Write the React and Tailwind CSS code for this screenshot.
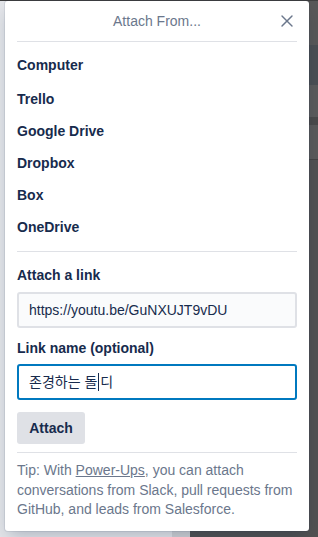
import { X } from "lucide-react";

const sources = ["Computer", "Trello", "Google Drive", "Dropbox", "Box", "OneDrive"];

function Backdrop() {
  return (
    <div className="absolute inset-0 flex flex-col">
      <div className="h-px bg-[#3f3f3f]" />
      <div className="flex flex-1">
        <div className="w-[172px] bg-[#e3e5e9]" />
        <div className="w-[18px] bg-[#cfd1d4]" />
        <div className="flex flex-1 flex-col bg-[#4f4f4f]">
          <div className="h-[44px] bg-[#585858]" />
          <div className="h-[40px] bg-[#4b4f53]" />
          <div className="h-[32px] bg-[#5b5b5b]" />
          <div className="h-[8px] bg-[#4a4a4a]" />
          <div className="h-[34px] bg-[#5a5a5a]" />
          <div className="h-[1px] bg-[#444]" />
          <div className="flex-1 bg-[#525252]" />
        </div>
      </div>
    </div>
  );
}

export default function App() {
  return (
    <div
      className="relative h-[537px] w-[318px] overflow-hidden"
      style={{ fontFamily: '"Liberation Sans", Arial, "Noto Sans CJK KR", sans-serif' }}
    >
      <Backdrop />

      {/* Popover */}
      <div className="absolute left-[5px] top-px w-[304px] rounded-[3px] bg-white shadow-[0_8px_16px_-4px_rgba(9,30,66,0.25),0_0_0_1px_rgba(9,30,66,0.08)]">
        <div className="relative mx-3 flex h-[41px] items-center justify-center border-b border-[#dfe1e6]">
          <span className="text-sm text-[#6b778c]">Attach From...</span>
          <button type="button" className="absolute right-0 top-[10px] text-[#6b778c]" aria-label="Close">
            <X size={20} strokeWidth={1.7} />
          </button>
        </div>

        <div className="px-3 pb-[11px]">
          <ul className="pt-[7px]">
            {sources.map((s, i) => (
              <li
                key={s}
                className={`flex h-8 items-center text-sm font-bold text-[#172b4d] ${i === 0 ? "mb-[2px]" : ""}`}
              >
                {s}
              </li>
            ))}
          </ul>

          <div className="mt-2 border-t border-[#dfe1e6]" />

          <div className="mt-[13px] flex h-5 items-center text-sm font-bold text-[#172b4d]">Attach a link</div>
          <div className="mt-[7px] flex h-9 items-center rounded-[3px] border-2 border-[#dfe1e6] bg-[#fafbfc] px-[10px] text-sm text-[#172b4d]">
            https://youtu.be/GuNXUJT9vDU
          </div>

          <div className="mt-[10px] flex h-5 items-center text-sm font-bold text-[#172b4d]">Link name (optional)</div>
          <div className="mt-[6px] flex h-9 items-center rounded-[3px] border-2 border-[#0079bf] bg-white px-[10px] text-sm text-[#172b4d]">
            <span>존경하는 돌</span>
            <span className="mx-px inline-block h-[18px] w-px bg-[#172b4d]" />
            <span>디</span>
          </div>

          <button
            type="button"
            className="mt-[12px] flex h-8 w-[68px] items-center justify-center rounded-[3px] bg-[#dfe1e6] text-sm font-bold text-[#172b4d]"
          >
            Attach
          </button>

          <div className="mt-2 border-t border-[#dfe1e6]" />

          <p className="pt-2 text-sm leading-[19.5px] text-[#6b778c]">
            Tip: With <span className="underline">Power-Ups</span>, you can attach conversations from Slack, pull requests from GitHub, and leads from Salesforce.
          </p>
        </div>
      </div>
    </div>
  );
}
